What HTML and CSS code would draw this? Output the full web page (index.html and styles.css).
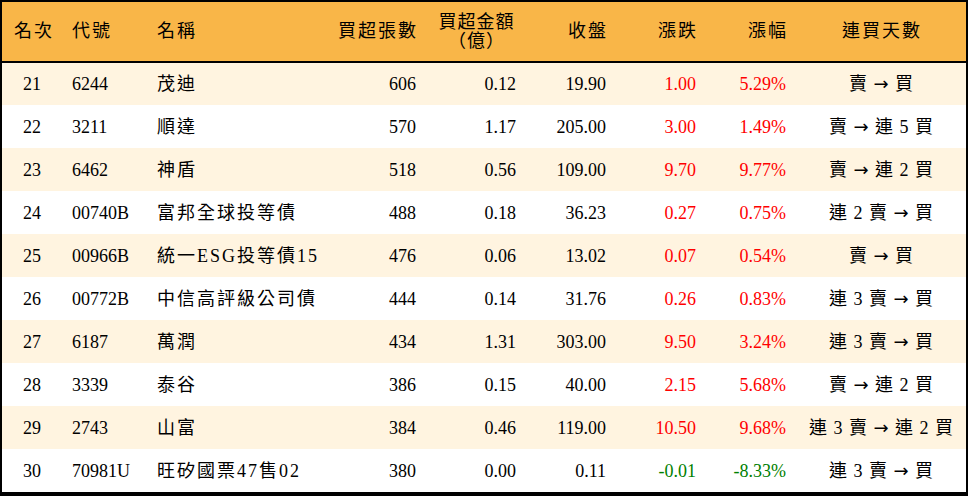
FILE: index.html
```html
<!DOCTYPE html>
<html lang="zh-Hant">
<head>
<meta charset="utf-8">
<link rel="stylesheet" href="styles.css">
</head>
<body>
<div class="frame">
<table class="board">
<colgroup>
<col class="c1"><col class="c2"><col class="c3"><col class="c4"><col class="c5"><col class="c6"><col class="c7"><col class="c8"><col class="c9">
</colgroup>
<thead>
<tr>
<th class="ctr">名次</th>
<th class="lft">代號</th>
<th class="lft">名稱</th>
<th class="rgt">買超張數</th>
<th class="ctr two">買超金額<br>（億）</th>
<th class="rgt">收盤</th>
<th class="rgt">漲跌</th>
<th class="rgt">漲幅</th>
<th class="ctr">連買天數</th>
</tr>
</thead>
<tbody>
<tr class="alt"><td class="ctr">21</td><td class="lft">6244</td><td class="lft nm">茂迪</td><td class="rgt">606</td><td class="rgt">0.12</td><td class="rgt">19.90</td><td class="rgt up">1.00</td><td class="rgt up">5.29%</td><td class="ctr days">賣 <span class="arr">→</span> 買</td></tr>
<tr><td class="ctr">22</td><td class="lft">3211</td><td class="lft nm">順達</td><td class="rgt">570</td><td class="rgt">1.17</td><td class="rgt">205.00</td><td class="rgt up">3.00</td><td class="rgt up">1.49%</td><td class="ctr days">賣 <span class="arr">→</span> 連 5 買</td></tr>
<tr class="alt"><td class="ctr">23</td><td class="lft">6462</td><td class="lft nm">神盾</td><td class="rgt">518</td><td class="rgt">0.56</td><td class="rgt">109.00</td><td class="rgt up">9.70</td><td class="rgt up">9.77%</td><td class="ctr days">賣 <span class="arr">→</span> 連 2 買</td></tr>
<tr><td class="ctr">24</td><td class="lft">00740B</td><td class="lft nm">富邦全球投等債</td><td class="rgt">488</td><td class="rgt">0.18</td><td class="rgt">36.23</td><td class="rgt up">0.27</td><td class="rgt up">0.75%</td><td class="ctr days">連 2 賣 <span class="arr">→</span> 買</td></tr>
<tr class="alt"><td class="ctr">25</td><td class="lft">00966B</td><td class="lft nm">統一ESG投等債15</td><td class="rgt">476</td><td class="rgt">0.06</td><td class="rgt">13.02</td><td class="rgt up">0.07</td><td class="rgt up">0.54%</td><td class="ctr days">賣 <span class="arr">→</span> 買</td></tr>
<tr><td class="ctr">26</td><td class="lft">00772B</td><td class="lft nm">中信高評級公司債</td><td class="rgt">444</td><td class="rgt">0.14</td><td class="rgt">31.76</td><td class="rgt up">0.26</td><td class="rgt up">0.83%</td><td class="ctr days">連 3 賣 <span class="arr">→</span> 買</td></tr>
<tr class="alt"><td class="ctr">27</td><td class="lft">6187</td><td class="lft nm">萬潤</td><td class="rgt">434</td><td class="rgt">1.31</td><td class="rgt">303.00</td><td class="rgt up">9.50</td><td class="rgt up">3.24%</td><td class="ctr days">連 3 賣 <span class="arr">→</span> 買</td></tr>
<tr><td class="ctr">28</td><td class="lft">3339</td><td class="lft nm">泰谷</td><td class="rgt">386</td><td class="rgt">0.15</td><td class="rgt">40.00</td><td class="rgt up">2.15</td><td class="rgt up">5.68%</td><td class="ctr days">賣 <span class="arr">→</span> 連 2 買</td></tr>
<tr class="alt"><td class="ctr">29</td><td class="lft">2743</td><td class="lft nm">山富</td><td class="rgt">384</td><td class="rgt">0.46</td><td class="rgt">119.00</td><td class="rgt up">10.50</td><td class="rgt up">9.68%</td><td class="ctr days">連 3 賣 <span class="arr">→</span> 連 2 買</td></tr>
<tr><td class="ctr">30</td><td class="lft">70981U</td><td class="lft nm">旺矽國票47售02</td><td class="rgt">380</td><td class="rgt">0.00</td><td class="rgt">0.11</td><td class="rgt down">-0.01</td><td class="rgt down">-8.33%</td><td class="ctr days">連 3 賣 <span class="arr">→</span> 買</td></tr>
</tbody>
</table>
</div>
</body>
</html>
```

FILE: styles.css
```css
* { box-sizing: border-box; }
html, body { margin: 0; padding: 0; background: #ffffff; }
.frame {
  width: 968px;
  height: 496px;
  border: 2px solid #000000;
  border-bottom-width: 4px;
  overflow: hidden;
  background: #ffffff;
}
.board {
  width: 964px;
  border-collapse: collapse;
  table-layout: fixed;
  font-family: "Liberation Serif", "Noto Sans CJK TC", serif;
  font-size: 18px;
  color: #000000;
}
.c1 { width: 60px; }
.c2 { width: 85px; }
.c3 { width: 179px; }
.c4 { width: 100px; }
.c5 { width: 100px; }
.c6 { width: 90px; }
.c7 { width: 90px; }
.c8 { width: 90px; }
.c9 { width: 170px; }
.board thead tr {
  height: 60px;
  background: #f9b648;
}
.board thead th {
  font-weight: normal;
  border-bottom: 2px solid #000000;
  line-height: 19px;
  padding: 0 10px;
  letter-spacing: 2px;
  white-space: nowrap;
  vertical-align: middle;
}
.board thead th.rgt { padding-right: 8px; }
.board thead th.ctr { padding-left: 12px; }
.board thead th.two { letter-spacing: 1px; padding-left: 11px; }
.board tbody tr { height: 43px; }
.board tbody tr.alt { background: #fff4e0; }
.board td {
  padding: 0 10px;
  line-height: 20px;
  white-space: nowrap;
  vertical-align: middle;
}
.board td.nm { letter-spacing: 2px; }
.board td.days { word-spacing: 2px; }
.arr {
  font-family: "DejaVu Sans", sans-serif;
  font-size: 18px;
}
.ctr { text-align: center; }
.lft { text-align: left; }
.rgt { text-align: right; }
.up { color: #ff0000; }
.down { color: #008000; }
```
